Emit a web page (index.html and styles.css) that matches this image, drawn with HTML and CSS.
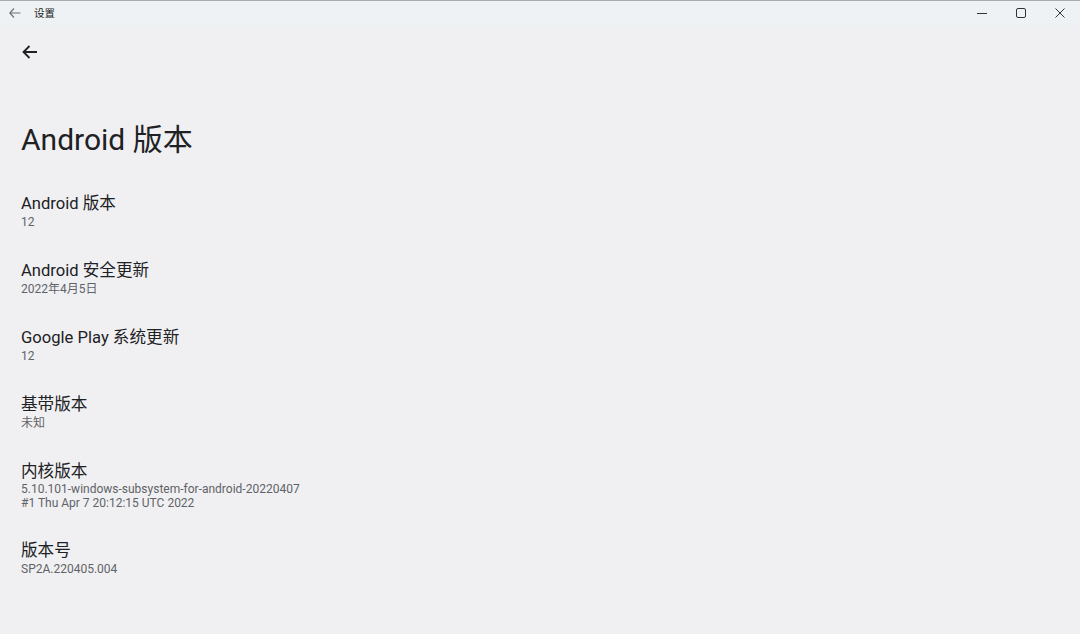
FILE: index.html
```html
<!DOCTYPE html>
<html lang="zh-CN">
<head>
<meta charset="UTF-8">
<meta name="viewport" content="width=device-width, initial-scale=1.0">
<title>设置</title>
<link rel="stylesheet" href="styles.css">
</head>
<body>
<div class="window">
    <div class="titlebar">
        <div class="titlebar-left">
            <svg class="tb-back" width="12" height="10" viewBox="0 0 12 10"><path d="M5 0.5L0.8 5L5 9.5M0.8 5H11.5" fill="none" stroke="#6b7075" stroke-width="1.1"/></svg>
            <span class="tb-title">设置</span>
        </div>
        <div class="tb-controls">
            <span class="tb-btn"><svg width="10" height="10" viewBox="0 0 10 10"><path d="M0 5.5H10" stroke="#333" stroke-width="1"/></svg></span>
            <span class="tb-btn"><svg width="10" height="10" viewBox="0 0 10 10"><rect x="0.5" y="0.5" width="9" height="9" rx="1.5" fill="none" stroke="#333" stroke-width="1"/></svg></span>
            <span class="tb-btn"><svg width="10" height="10" viewBox="0 0 10 10"><path d="M0.5 0.5L9.5 9.5M9.5 0.5L0.5 9.5" stroke="#333" stroke-width="1"/></svg></span>
        </div>
    </div>
    <div class="content">
        <div class="toolbar">
            <svg class="back" width="16" height="14" viewBox="0 0 16 14"><path d="M7.5 1L1.5 7L7.5 13M1.5 7H15" fill="none" stroke="#202124" stroke-width="1.8"/></svg>
        </div>
        <h1 class="page-title">Android 版本</h1>
        <div class="prefs">
            <div class="pref">
                <div class="pref-title">Android 版本</div>
                <div class="pref-summary">12</div>
            </div>
            <div class="pref">
                <div class="pref-title">Android 安全更新</div>
                <div class="pref-summary">2022年4月5日</div>
            </div>
            <div class="pref">
                <div class="pref-title">Google Play 系统更新</div>
                <div class="pref-summary">12</div>
            </div>
            <div class="pref">
                <div class="pref-title">基带版本</div>
                <div class="pref-summary">未知</div>
            </div>
            <div class="pref">
                <div class="pref-title">内核版本</div>
                <div class="pref-summary">5.10.101-windows-subsystem-for-android-20220407<br>#1 Thu Apr 7 20:12:15 UTC 2022</div>
            </div>
            <div class="pref">
                <div class="pref-title">版本号</div>
                <div class="pref-summary">SP2A.220405.004</div>
            </div>
        </div>
    </div>
</div>
</body>
</html>
```

FILE: styles.css
```css
html, body {
    margin: 0;
    height: 100%;
}
body {
    font-family: Roboto, "Noto Sans CJK SC", sans-serif;
    background-color: #f0f0f2;
    color: #202124;
}
.window {
    display: flex;
    flex-direction: column;
    height: 100%;
}
.titlebar {
    height: 25px;
    border-top: 1px solid #a9adb0;
    background-color: #eef2f5;
    display: flex;
    justify-content: space-between;
    align-items: center;
    flex-shrink: 0;
}
.titlebar-left {
    display: flex;
    align-items: center;
    padding-left: 9px;
    margin-top: -2px;
}
.tb-back {
    display: block;
}
.tb-title {
    margin-left: 13px;
    font-size: 10.5px;
    color: #1b1b1b;
}
.tb-controls {
    display: flex;
    height: 100%;
    margin-top: -2px;
}
.tb-btn {
    width: 39px;
    display: flex;
    align-items: center;
    justify-content: center;
}
.tb-btn:last-child {
    width: 40px;
}
.content {
    flex: 1;
    padding: 0 21px;
}
.toolbar {
    height: 52px;
    display: flex;
    align-items: center;
    padding-left: 1px;
}
.back {
    display: block;
}
.page-title {
    margin: 42px 0 0;
    font-size: 30px;
    font-weight: 400;
    line-height: 40px;
}
.prefs {
    margin-top: 18px;
}
.pref {
    padding: 16px 0;
}
.pref:last-child {
    padding-top: 15px;
}
.pref-title {
    font-size: 16.6px;
    line-height: 20px;
}
.pref-summary {
    font-size: 12px;
    line-height: 14px;
    color: #5f6368;
    margin-top: 1px;
}
.pref:nth-child(5) .pref-summary {
    margin-top: 0;
}
```
